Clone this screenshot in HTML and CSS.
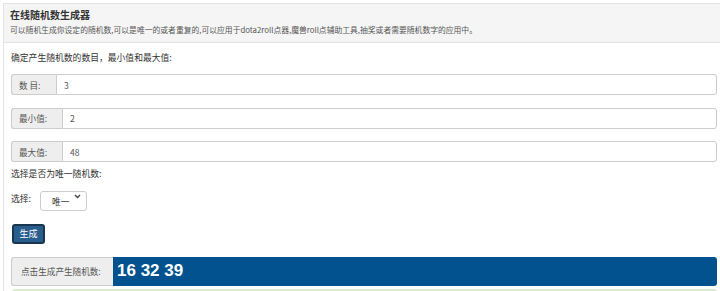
FILE: index.html
```html
<!DOCTYPE html>
<html lang="zh-CN">
<head>
    <meta charset="UTF-8">
    <meta name="viewport" content="width=device-width, initial-scale=1.0">
    <title>在线随机数生成器</title>
    <link rel="stylesheet" href="styles.css">
</head>
<body>
    <div class="panel">
        <div class="panel-heading">
            <h3 class="panel-title">在线随机数生成器</h3>
            <p class="panel-desc">可以随机生成你设定的随机数,可以是唯一的或者重复的,可以应用于dota2roll点器,魔兽roll点辅助工具,抽奖或者需要随机数字的应用中。</p>
        </div>

        <div class="panel-body">
            <p class="hint">确定产生随机数的数目，最小值和最大值:</p>

            <div class="input-group">
                <span class="addon addon-count">数 目:</span>
                <input type="text" class="form-control" id="count" value="3">
            </div>

            <div class="input-group">
                <span class="addon">最小值:</span>
                <input type="text" class="form-control" id="min" value="2">
            </div>

            <div class="input-group">
                <span class="addon">最大值:</span>
                <input type="text" class="form-control" id="max" value="48">
            </div>

            <p class="hint hint-unique">选择是否为唯一随机数:</p>

            <div class="select-row">
                <label for="unique">选择:</label>
                <span class="select-wrap">
                    <select id="unique">
                        <option value="1">唯一</option>
                        <option value="0">重复</option>
                    </select>
                    <svg class="chevron" width="7" height="5" viewBox="0 0 7 5">
                        <path d="M1 1 L3.5 3.5 L6 1" fill="none" stroke="#444" stroke-width="1.4"/>
                    </svg>
                </span>
            </div>

            <button type="button" id="make-btn" class="btn btn-primary">生成</button>

            <div class="input-group result-group">
                <span class="addon addon-result">点击生成产生随机数:</span>
                <div class="result" id="result">16 32 39</div>
            </div>

            <div class="alert-success"></div>
        </div>
    </div>

    <script>
        const makeBtn = document.getElementById('make-btn');
        const result = document.getElementById('result');

        // Generate random numbers
        makeBtn.addEventListener('click', () => {
            const count = parseInt(document.getElementById('count').value, 10) || 1;
            const min = parseInt(document.getElementById('min').value, 10) || 0;
            const max = parseInt(document.getElementById('max').value, 10) || 0;
            const unique = document.getElementById('unique').value === '1';
            const nums = [];

            while (nums.length < count) {
                const n = Math.floor(Math.random() * (max - min + 1)) + min;
                if (unique && nums.includes(n)) {
                    if (max - min + 1 <= nums.length) break;
                    continue;
                }
                nums.push(n);
            }

            nums.sort((a, b) => a - b);
            result.textContent = nums.join(' ');
        });
    </script>
</body>
</html>
```

FILE: styles.css
```css
* {
    box-sizing: border-box;
    font-family: 'Noto Sans CJK SC', 'Liberation Sans', sans-serif;
}

body {
    margin: 0;
    background-color: white;
    overflow: hidden;
}

.panel {
    margin: 3px -4px 0 3px;
    border: 1px solid #e3e3e3;
    border-right: none;
    border-bottom: none;
}

.panel-heading {
    background-color: #f5f5f5;
    border-bottom: 1px solid #e3e3e3;
    padding: 3px 6px 4px;
    height: 39px;
}

.panel-title {
    margin: 0;
    font-size: 10px;
    line-height: 15px;
    font-weight: bold;
    color: #333;
}

.panel-desc {
    margin: 2px 0 0;
    font-size: 7.8px;
    line-height: 12px;
    color: #555;
}

.panel-body {
    padding: 8px 7px 0;
}

.hint {
    margin: 0 0 9px;
    font-size: 8.8px;
    line-height: 14px;
    color: #333;
}

.input-group {
    display: flex;
    height: 21px;
    margin-bottom: 12.5px;
}

.addon {
    display: flex;
    align-items: center;
    padding: 0 7px;
    width: 51px;
    background-color: #eee;
    border: 1px solid #ccc;
    border-right: none;
    border-radius: 3px 0 0 3px;
    font-size: 8.6px;
    color: #555;
}

.addon-count {
    width: 45px;
}

.form-control {
    flex: 1;
    height: 100%;
    padding: 0 7px;
    border: 1px solid #ccc;
    border-radius: 0 3px 3px 0;
    font-size: 8.6px;
    color: #555;
    outline: none;
}

.hint-unique {
    margin: -8px 0 5px;
}

.select-row {
    display: flex;
    align-items: center;
    margin-bottom: 13px;
}

.select-row label {
    font-size: 8.8px;
    color: #333;
    margin-right: 9px;
}

.select-wrap {
    position: relative;
    display: inline-block;
}

.select-wrap select {
    appearance: none;
    -webkit-appearance: none;
    width: 47px;
    height: 20px;
    padding: 0 0 0 11px;
    border: 1px solid #ccc;
    border-radius: 3px;
    background-color: white;
    font-size: 8.6px;
    color: #333;
    outline: none;
}

.chevron {
    position: absolute;
    right: 6px;
    top: 8px;
    pointer-events: none;
}

.btn {
    display: block;
    height: 20px;
    width: 33px;
    padding: 0;
    margin: 0 0 13px 1px;
    border-radius: 3px;
    font-size: 9px;
    cursor: pointer;
}

.btn-primary {
    background-color: #285d8c;
    border: 2px solid #1a3550;
    color: white;
}

.btn-primary:hover {
    background-color: #204d74;
}

.result-group {
    height: 29px;
    margin-bottom: 3px;
}

.addon-result {
    width: 102px;
    padding: 0 0 0 9px;
    border-radius: 3px 0 0 3px;
}

.result {
    flex: 1;
    display: flex;
    align-items: center;
    padding: 0 4px;
    background-color: #01528f;
    border-radius: 0 3px 3px 0;
    color: white;
    font-family: 'Liberation Sans', Arial, sans-serif;
    font-size: 17px;
    font-weight: bold;
}

.alert-success {
    height: 20px;
    background-color: #dff0d8;
    border: 1px solid #d6e9c6;
    border-radius: 3px;
    margin-left: 1px;
}
```
